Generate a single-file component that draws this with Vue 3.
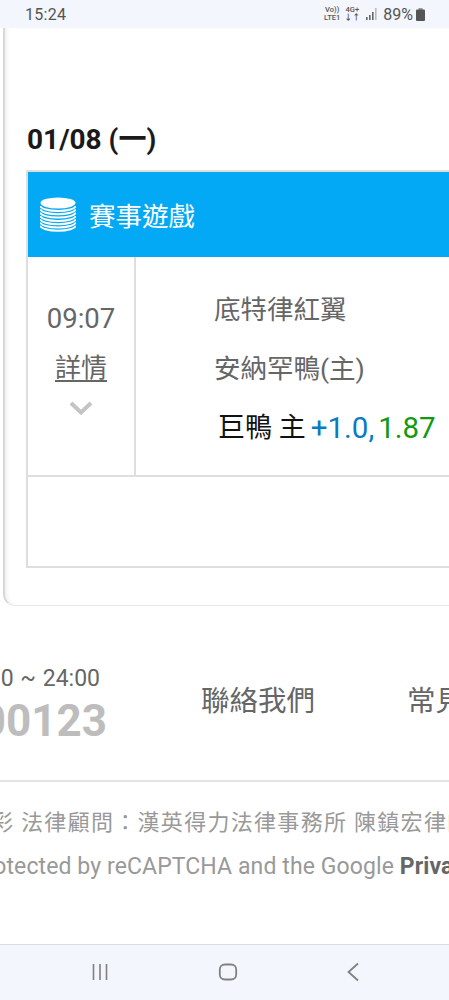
<template>
  <div class="screen">
    <div class="status-bar">
      <span class="clock">15:24</span>
      <div class="status-icons">
        <span class="net"><span>Vo))</span><span>LTE1</span></span>
        <span class="net"><span>4G+</span><span class="arrows">↓↑</span></span>
        <svg class="signal" width="12" height="12" viewBox="0 0 12 12">
          <rect x="0" y="9" width="1.6" height="3" fill="#666" />
          <rect x="3" y="7" width="1.6" height="5" fill="#666" />
          <rect x="6" y="4" width="1.6" height="8" fill="#666" />
          <rect x="9" y="0" width="1.6" height="12" fill="#bbb" />
        </svg>
        <span class="percent">89%</span>
        <svg class="battery" width="9" height="13" viewBox="0 0 9 13">
          <rect x="2.5" y="0" width="4" height="2" fill="#999" />
          <rect x="0" y="1.5" width="9" height="11.5" rx="1" fill="#555" />
        </svg>
      </div>
    </div>

    <div class="page">
      <section class="panel">
        <h2 class="date">01/08 (一)</h2>
        <div class="game-table">
          <div class="table-head">
            <svg class="coins" width="36" height="36" viewBox="0 0 36 36">
              <ellipse cx="18" cy="6" rx="17.5" ry="5.5" fill="#fff" />
              <path
                v-for="y in stackLines"
                :key="y"
                :d="`M0.5 ${y}a17.5 5 0 0 0 35 0`"
                fill="none"
                stroke="#fff"
                stroke-width="2"
              />
            </svg>
            <span class="head-title">賽事遊戲</span>
          </div>
          <div class="game-row">
            <div class="time-cell">
              <span class="time">09:07</span>
              <a class="detail">詳情</a>
              <svg class="chevron" width="24" height="14" viewBox="0 0 24 14">
                <path d="M2 2l10 9.500L22 2" fill="none" stroke="#c4c4c4" stroke-width="4" />
              </svg>
            </div>
            <div class="teams">
              <div class="team">底特律紅翼</div>
              <div class="team">安納罕鴨(主)</div>
              <div class="pick">
                <span class="pick-name">巨鴨 主</span>
                <span class="line">+1.0,</span>
                <span class="odds">1.87</span>
              </div>
            </div>
          </div>
          <div class="empty-row"></div>
        </div>
      </section>

      <footer class="site-footer">
        <div class="contact-row">
          <div class="hours">
            <span class="hours-time">0 ~ 24:00</span>
            <span class="hours-phone">00123</span>
          </div>
          <span class="foot-link first">聯絡我們</span>
          <span class="foot-link">常見問題</span>
        </div>
        <div class="legal">
          <div class="legal-line cjk">彩 法律顧問：漢英得力法律事務所 陳鎮宏律師</div>
          <div class="legal-line latin">Protected by reCAPTCHA and the Google <b>Privacy</b></div>
        </div>
      </footer>
    </div>

    <nav class="nav-bar">
      <svg width="18" height="18" viewBox="0 0 18 18">
        <path d="M2.500 1v16M9 1v16M15.500 1v16" stroke="#808080" stroke-width="1.600" fill="none" />
      </svg>
      <svg width="20" height="18" viewBox="0 0 20 18">
        <rect x="1.800" y="1.500" width="16.400" height="15" rx="5" stroke="#808080" stroke-width="1.800" fill="none" />
      </svg>
      <svg width="14" height="20" viewBox="0 0 14 20">
        <path d="M12 1.500L2.500 10l9.500 8.500" stroke="#808080" stroke-width="1.800" fill="none" />
      </svg>
    </nav>
  </div>
</template>

<script setup>
// coin stack layers below the top ellipse
const stackLines = [9, 12.3, 15.6, 18.9, 22.2, 25.5, 28.8]
</script>

<style>
html,
body {
  margin: 0;
  background: #fff;
}
</style>

<style scoped>
.screen {
  width: 449px;
  height: 1000px;
  display: flex;
  flex-direction: column;
  overflow: hidden;
  background: #fff;
  font-family: Roboto, "Noto Sans CJK TC", sans-serif;
}

.status-bar {
  height: 28px;
  flex: none;
  display: flex;
  align-items: center;
  justify-content: space-between;
  padding: 0 24px 0 25px;
  background: #f3f6fc;
  color: #555;
}
.clock {
  font-size: 16px;
  letter-spacing: 0.300px;
}
.status-icons {
  display: flex;
  align-items: center;
  gap: 4px;
}
.net {
  display: flex;
  flex-direction: column;
  align-items: center;
  font-size: 7.500px;
  line-height: 8px;
  font-weight: 500;
}
.arrows {
  font-size: 8px;
  font-weight: 700;
}
.signal {
  margin: 0 1px 0 2px;
}
.percent {
  font-size: 16px;
}
.battery {
  margin-left: -1px;
}

.page {
  flex: 1;
  min-height: 0;
  overflow: hidden;
}

.panel {
  box-sizing: border-box;
  width: 640px;
  height: 578px;
  margin-left: 3px;
  padding: 94px 0 0 24px;
  border-left: 2px solid #d8d8d8;
  border-bottom: 1px solid #e8e8e8;
  border-radius: 0 0 0 12px;
  box-shadow: inset 4px 0 4px -2px #f0f0f0;
}
.date {
  margin: 0 0 12px -2px;
  font-size: 28px;
  line-height: 36px;
  font-weight: 700;
  color: #1a1a1a;
}
.game-table {
  margin-left: -3px;
  border: 2px solid #dedede;
}
.table-head {
  height: 85px;
  display: flex;
  align-items: center;
  gap: 13px;
  padding-left: 12px;
  background: #03a9f4;
}
.head-title {
  font-size: 26.500px;
  color: #fff;
}
.coins {
  margin-top: 1px;
}
.game-row {
  height: 218px;
  display: flex;
  border-bottom: 2px solid #dedede;
}
.time-cell {
  box-sizing: border-box;
  width: 108px;
  flex: none;
  display: flex;
  flex-direction: column;
  align-items: center;
  padding-top: 44px;
  border-right: 2px solid #dedede;
  color: #666;
}
.time {
  font-size: 27.500px;
  line-height: 36px;
}
.detail {
  margin-top: 13px;
  font-size: 26px;
  line-height: 36px;
  text-decoration: underline;
  text-underline-offset: 3px;
}
.chevron {
  margin-top: 15px;
}
.teams {
  padding: 33px 0 0 78px;
  color: #666;
}
.team {
  font-size: 26.500px;
  line-height: 40px;
  margin-bottom: 19px;
}
.pick {
  display: flex;
  align-items: center;
  gap: 4px;
  margin: 1px 0 0 4px;
  font-size: 29.500px;
  line-height: 40px;
}
.pick-name {
  color: #111;
  font-size: 27px;
  margin-right: 1px;
}
.line {
  color: #0a7bc0;
}
.odds {
  color: #119a11;
}
.empty-row {
  height: 89px;
}

.site-footer {
  width: 449px;
  overflow: hidden;
}
.contact-row {
  height: 176px;
  display: flex;
  padding-top: 60px;
  box-sizing: border-box;
  border-bottom: 2px solid #e2e2e2;
}
.hours {
  width: 107px;
  flex: none;
  display: flex;
  flex-direction: column;
  align-items: flex-end;
  overflow: hidden;
  white-space: nowrap;
}
.hours-time {
  font-size: 23px;
  line-height: 26px;
  color: #666;
  padding-right: 7px;
  word-spacing: 1px;
}
.hours-phone {
  margin-top: 2px;
  font-size: 44px;
  line-height: 54px;
  font-weight: 700;
  color: #bdbdbd;
}
.foot-link {
  flex: none;
  margin-left: 92px;
  padding-top: 16px;
  font-size: 28.500px;
  line-height: 40px;
  color: #666;
  white-space: nowrap;
}
.foot-link.first {
  margin-left: 94px;
}
.legal {
  padding-top: 19px;
  color: #999;
}
.legal-line {
  white-space: nowrap;
}
.cjk {
  margin-left: -9px;
  font-size: 22px;
  letter-spacing: 1.300px;
  height: 44px;
  line-height: 44px;
}
.latin {
  margin: 0 0 0 -29px;
  font-size: 23px;
  line-height: 44px;
  letter-spacing: 0.100px;
}
.latin b {
  color: #666;
}

.nav-bar {
  height: 56px;
  flex: none;
  box-sizing: border-box;
  display: flex;
  align-items: center;
  border-top: 1px solid #dcdcdc;
  background: #f3f6fc;
  padding: 0 89px 2px 91px;
  justify-content: space-between;
}
</style>
